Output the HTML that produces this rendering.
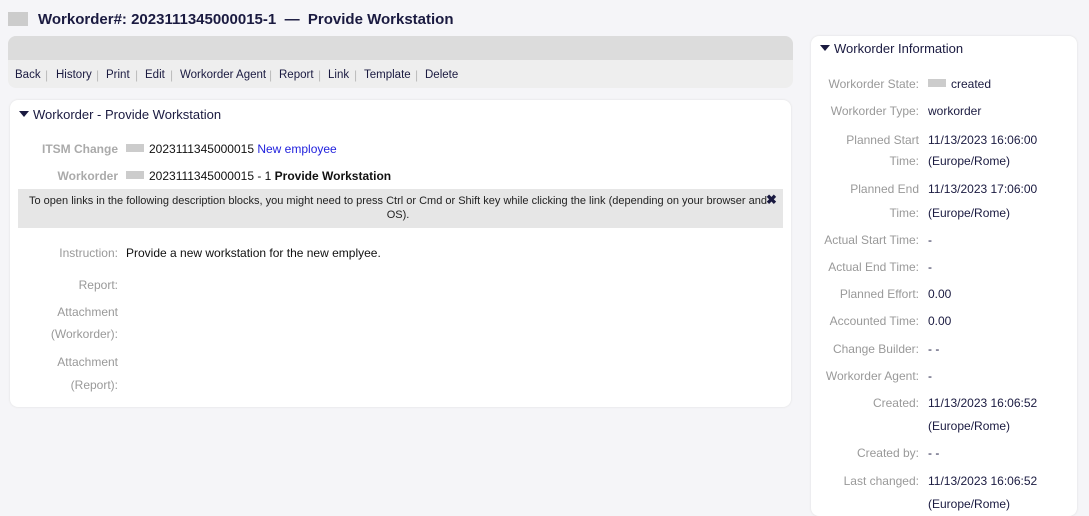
<!DOCTYPE html>
<html><head><meta charset="utf-8"><style>
body{margin:0;width:1089px;height:504px;background:#f5f5f8;font-family:"Liberation Sans",sans-serif;font-size:12px;color:#1a1a40;position:relative;overflow:hidden}
.a{position:absolute;white-space:nowrap;line-height:14px}
.l{position:absolute;white-space:nowrap;line-height:14px;text-align:right;color:#999}
.rl{left:811px;width:108px}
.ll{left:10px;width:108px}
.v{left:928px}
.lv{left:126px;color:#111}
.sq{display:inline-block;width:18px;height:8px;background:#ccc;vertical-align:1px;margin-right:5px}
.tri{display:inline-block;width:0;height:0;border-left:5px solid transparent;border-right:5px solid transparent;border-top:6px solid #1a1a40;vertical-align:2px;margin-right:4px}
.s{position:absolute;top:68px;color:#bbb;line-height:14px}
.t{position:absolute;top:68px;line-height:14px;white-space:nowrap;font-size:11.5px}
</style></head><body>
<div style="position:absolute;left:8px;top:12px;width:20px;height:14px;background:#ccc"></div>
<div class="a" style="left:38px;top:11px;font-size:15px;font-weight:bold;line-height:17px">Workorder#: 2023111345000015-1 &nbsp;— &nbsp;Provide Workstation</div>

<div style="position:absolute;left:8px;top:36px;width:785px;height:52px;background:#eeeeee;border-radius:8px;overflow:hidden"><div style="height:24px;background:#dcdcdc"></div></div>
<div class="t" style="left:15px">Back</div><div class="s" style="left:45px">|</div>
<div class="t" style="left:56px">History</div><div class="s" style="left:96px">|</div>
<div class="t" style="left:106px">Print</div><div class="s" style="left:135px">|</div>
<div class="t" style="left:145px">Edit</div><div class="s" style="left:170px">|</div>
<div class="t" style="left:180px">Workorder Agent</div><div class="s" style="left:269px">|</div>
<div class="t" style="left:279px">Report</div><div class="s" style="left:318px">|</div>
<div class="t" style="left:328px">Link</div><div class="s" style="left:354px">|</div>
<div class="t" style="left:364px">Template</div><div class="s" style="left:415px">|</div>
<div class="t" style="left:425px">Delete</div>

<div style="position:absolute;left:10px;top:100px;width:781px;height:307px;background:#fff;border-radius:8px;box-shadow:0 0 2px #ddd"></div>
<div class="a" style="left:19px;top:107px;font-size:13px;line-height:16px"><span class="tri"></span>Workorder - Provide Workstation</div>
<div class="l ll" style="top:142px;font-weight:bold;color:#aaa">ITSM Change</div>
<div class="a lv" style="top:142px"><span class="sq"></span>2023111345000015 <span style="color:#2222dd">New employee</span></div>
<div class="l ll" style="top:169px;font-weight:bold;color:#aaa">Workorder</div>
<div class="a lv" style="top:169px"><span class="sq"></span>2023111345000015 - 1 <b>Provide Workstation</b></div>
<div style="position:absolute;left:18px;top:189px;width:765px;height:39px;background:#e6e6e6"></div>
<div class="a" style="left:18px;top:194px;width:760px;text-align:center;white-space:normal;font-size:11px;line-height:14px;color:#222">To open links in the following description blocks, you might need to press Ctrl or Cmd or Shift key while clicking the link (depending on your browser and OS).</div>
<div class="a" style="left:766px;top:193px;font-weight:bold;font-size:13px">✖</div>
<div class="l ll" style="top:246px">Instruction:</div>
<div class="a lv" style="top:246px">Provide a new workstation for the new emplyee.</div>
<div class="l ll" style="top:278px">Report:</div>
<div class="l ll" style="top:305px">Attachment</div>
<div class="l ll" style="top:327px">(Workorder):</div>
<div class="l ll" style="top:355px">Attachment</div>
<div class="l ll" style="top:378px">(Report):</div>

<div style="position:absolute;left:811px;top:36px;width:266px;height:480px;background:#fff;border-radius:8px;box-shadow:0 0 2px #ddd"></div>
<div class="a" style="left:820px;top:41px;font-size:13px;line-height:16px"><span class="tri"></span>Workorder Information</div>
<div class="l rl" style="top:77px">Workorder State:</div><div class="a v" style="top:77px"><span class="sq"></span>created</div>
<div class="l rl" style="top:104px">Workorder Type:</div><div class="a v" style="top:104px">workorder</div>
<div class="l rl" style="top:133px">Planned Start</div><div class="a v" style="top:133px">11/13/2023 16:06:00</div>
<div class="l rl" style="top:154px">Time:</div><div class="a v" style="top:154px">(Europe/Rome)</div>
<div class="l rl" style="top:182px">Planned End</div><div class="a v" style="top:182px">11/13/2023 17:06:00</div>
<div class="l rl" style="top:206px">Time:</div><div class="a v" style="top:206px">(Europe/Rome)</div>
<div class="l rl" style="top:233px">Actual Start Time:</div><div class="a v" style="top:233px">-</div>
<div class="l rl" style="top:260px">Actual End Time:</div><div class="a v" style="top:260px">-</div>
<div class="l rl" style="top:287px">Planned Effort:</div><div class="a v" style="top:287px">0.00</div>
<div class="l rl" style="top:314px">Accounted Time:</div><div class="a v" style="top:314px">0.00</div>
<div class="l rl" style="top:342px">Change Builder:</div><div class="a v" style="top:342px">- -</div>
<div class="l rl" style="top:369px">Workorder Agent:</div><div class="a v" style="top:369px">-</div>
<div class="l rl" style="top:396px">Created:</div><div class="a v" style="top:396px">11/13/2023 16:06:52</div>
<div class="a v" style="top:419px">(Europe/Rome)</div>
<div class="l rl" style="top:446px">Created by:</div><div class="a v" style="top:446px">- -</div>
<div class="l rl" style="top:474px">Last changed:</div><div class="a v" style="top:474px">11/13/2023 16:06:52</div>
<div class="a v" style="top:497px">(Europe/Rome)</div>
</body></html>
